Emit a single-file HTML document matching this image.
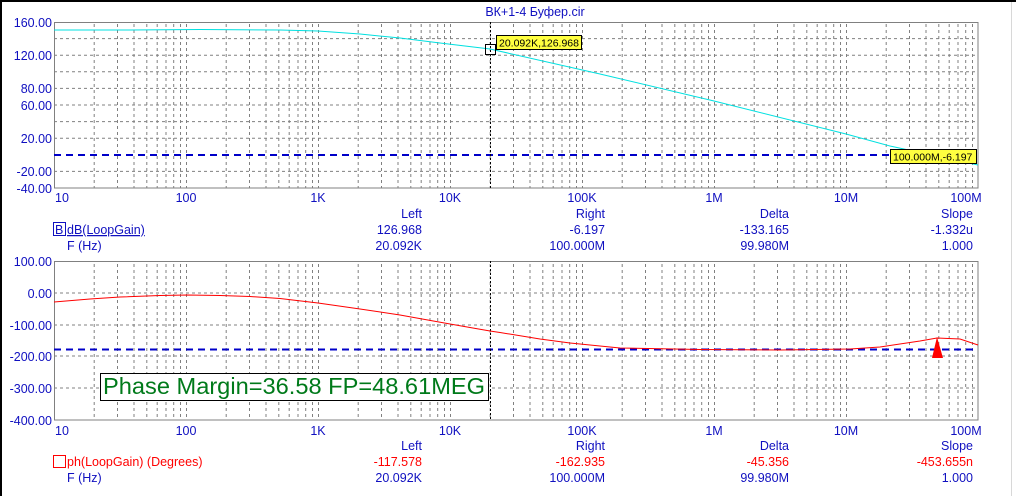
<!DOCTYPE html>
<html><head><meta charset="utf-8"><style>
html,body{margin:0;padding:0;background:#fff;}
body{width:1016px;height:496px;overflow:hidden;position:relative;}
svg{position:absolute;left:0;top:0;}
text{font-family:"Liberation Sans",Arial,sans-serif;font-size:12.5px;}
</style></head><body>
<svg width="1016" height="496" viewBox="0 0 1016 496" xmlns="http://www.w3.org/2000/svg">
<defs>
<pattern id="vx" x="54" y="0" width="132" height="496" patternUnits="userSpaceOnUse">
<g stroke="#808080" stroke-width="1" stroke-dasharray="3,3">
<line x1="0.5" y1="0" x2="0.5" y2="496"/>
<line x1="40.2" y1="0" x2="40.2" y2="496"/>
<line x1="63.5" y1="0" x2="63.5" y2="496"/>
<line x1="80" y1="0" x2="80" y2="496"/>
<line x1="92.8" y1="0" x2="92.8" y2="496"/>
<line x1="103.2" y1="0" x2="103.2" y2="496"/>
<line x1="112" y1="0" x2="112" y2="496"/>
<line x1="119.7" y1="0" x2="119.7" y2="496"/>
<line x1="126.5" y1="0" x2="126.5" y2="496"/>
</g></pattern>
<clipPath id="c1"><rect x="54" y="22" width="924" height="166"/></clipPath>
</defs>
<rect x="0" y="0" width="1016" height="2" fill="#000"/>
<rect x="0" y="0" width="2" height="496" fill="#000"/>
<rect x="1011" y="2" width="1" height="494" fill="#d8d8d8"/>

<!-- top plot -->
<rect x="54" y="22" width="924" height="166" fill="url(#vx)"/>
<g stroke="#808080" stroke-dasharray="3,3">
<line x1="54" y1="38.6" x2="978" y2="38.6"/><line x1="54" y1="55.2" x2="978" y2="55.2"/>
<line x1="54" y1="71.8" x2="978" y2="71.8"/><line x1="54" y1="88.4" x2="978" y2="88.4"/>
<line x1="54" y1="105" x2="978" y2="105"/><line x1="54" y1="121.6" x2="978" y2="121.6"/>
<line x1="54" y1="138.2" x2="978" y2="138.2"/><line x1="54" y1="171.4" x2="978" y2="171.4"/>
</g>
<rect x="54.5" y="22.5" width="923.5" height="165.5" fill="none" stroke="#808080"/>
<line x1="54" y1="155" x2="978" y2="155" stroke="#0000c8" stroke-width="2" stroke-dasharray="7,5"/>
<line x1="490.5" y1="22" x2="490.5" y2="188" stroke="#000" stroke-dasharray="2,2"/>
<polyline clip-path="url(#c1)" fill="none" stroke="#00e0e0" stroke-width="1" points="54,30 130,30 200,29.5 280,30 318,31 360,34 400,38 440,43 490,49 600,74 714,101 846,134 890,146 978,165"/>
<rect x="485.5" y="44.5" width="10" height="10" fill="none" stroke="#000"/>
<rect x="496.5" y="35.5" width="85" height="14" fill="#ffff40" stroke="#000"/>
<text x="499" y="46.5" fill="#000" style="font-size:10.5px">20.092K,126.968</text>
<rect x="890.5" y="149.5" width="86" height="14" fill="#ffff40" stroke="#000"/>
<text x="893" y="160.5" fill="#000" style="font-size:10.5px">100.000M,-6.197</text>

<g fill="#1010c0" text-anchor="end">
<text x="52" y="27">160.00</text><text x="52" y="60">120.00</text>
<text x="52" y="93">80.00</text><text x="52" y="110">60.00</text>
<text x="52" y="143">20.00</text><text x="52" y="176">-20.00</text>
<text x="52" y="193">-40.00</text>
</g>
<g fill="#1010c0" text-anchor="middle">
<text x="535" y="16">ВК+1-4 Буфер.cir</text>
<text x="62" y="202">10</text><text x="186" y="202">100</text><text x="318" y="202">1K</text>
<text x="450" y="202">10K</text><text x="582" y="202">100K</text><text x="714" y="202">1M</text>
<text x="846" y="202">10M</text><text x="966" y="202">100M</text>
</g>
<g fill="#1010c0" text-anchor="end">
<text x="422" y="218">Left</text><text x="605" y="218">Right</text><text x="789" y="218">Delta</text><text x="973" y="218">Slope</text>
<text x="422" y="234">126.968</text><text x="605" y="234">-6.197</text><text x="789" y="234">-133.165</text><text x="973" y="234">-1.332u</text>
<text x="422" y="250">20.092K</text><text x="605" y="250">100.000M</text><text x="789" y="250">99.980M</text><text x="973" y="250">1.000</text>
</g>
<rect x="53.5" y="222.5" width="12" height="13" fill="none" stroke="#1010c0"/>
<text x="55" y="234" fill="#1010c0">B</text>
<text x="67" y="234" fill="#1010c0" text-decoration="underline">dB(LoopGain)</text>
<text x="67" y="250" fill="#1010c0">F (Hz)</text>

<!-- bottom plot -->
<rect x="54" y="261" width="924" height="159" fill="url(#vx)"/>
<g stroke="#808080" stroke-dasharray="3,3">
<line x1="54" y1="293" x2="978" y2="293"/><line x1="54" y1="325" x2="978" y2="325"/>
<line x1="54" y1="356" x2="978" y2="356"/><line x1="54" y1="388" x2="978" y2="388"/>
</g>
<rect x="54.5" y="261.5" width="923.5" height="158.5" fill="none" stroke="#808080"/>
<line x1="54" y1="349.5" x2="978" y2="349.5" stroke="#0000c8" stroke-width="2" stroke-dasharray="7,5"/>
<line x1="490.5" y1="261" x2="490.5" y2="420" stroke="#000" stroke-dasharray="2,2"/>
<polyline fill="none" stroke="#ff0000" stroke-width="1" points="54,302 90,299 120,297 160,295.5 187,295 220,295.5 250,296.5 280,298.5 318,303 360,309 400,315 450,324 490,331 500,332.5 540,339 570,343 620,348 700,349.5 780,350 850,349 880,347 920,341 937,338 960,339 978,345"/>
<polygon points="937,337 932,358 943,358" fill="#ff0000"/>
<rect x="100.5" y="373.5" width="388" height="27" fill="#fff" stroke="#000"/>
<text x="103" y="394" fill="#007a1a" style="font-size:23px" textLength="382" lengthAdjust="spacingAndGlyphs">Phase Margin=36.58 FP=48.61MEG</text>

<g fill="#1010c0" text-anchor="end">
<text x="52" y="266">100.00</text><text x="52" y="298">0.00</text>
<text x="52" y="330">-100.00</text><text x="52" y="361">-200.00</text>
<text x="52" y="393">-300.00</text><text x="52" y="425">-400.00</text>
</g>
<g fill="#1010c0" text-anchor="middle">
<text x="62" y="435">10</text><text x="186" y="435">100</text><text x="318" y="435">1K</text>
<text x="450" y="435">10K</text><text x="582" y="435">100K</text><text x="714" y="435">1M</text>
<text x="846" y="435">10M</text><text x="966" y="435">100M</text>
</g>
<g text-anchor="end">
<g fill="#1010c0"><text x="422" y="450">Left</text><text x="605" y="450">Right</text><text x="789" y="450">Delta</text><text x="973" y="450">Slope</text></g>
<g fill="#ff0000"><text x="422" y="466">-117.578</text><text x="605" y="466">-162.935</text><text x="789" y="466">-45.356</text><text x="973" y="466">-453.655n</text></g>
<g fill="#1010c0"><text x="422" y="482">20.092K</text><text x="605" y="482">100.000M</text><text x="789" y="482">99.980M</text><text x="973" y="482">1.000</text></g>
</g>
<rect x="53.5" y="455.5" width="12" height="12" fill="none" stroke="#ff0000"/>
<text x="67" y="466" fill="#ff0000">ph(LoopGain) (Degrees)</text>
<text x="67" y="482" fill="#1010c0">F (Hz)</text>
</svg>
</body></html>
